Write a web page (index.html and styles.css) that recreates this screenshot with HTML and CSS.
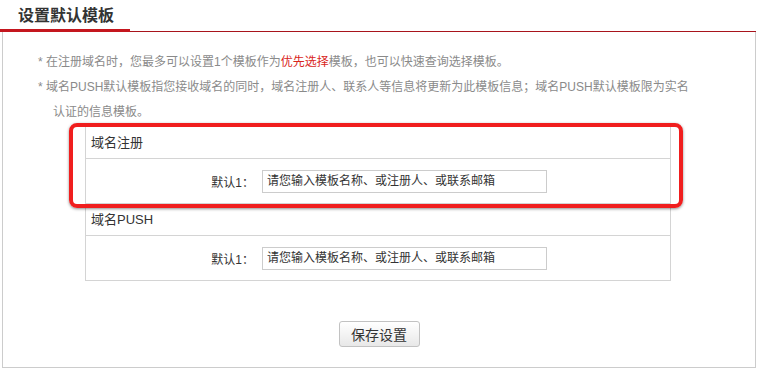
FILE: index.html
```html
<!DOCTYPE html>
<html lang="zh-CN">
<head>
    <meta charset="UTF-8">
    <title>设置默认模板</title>
    <link rel="stylesheet" href="styles.css">
</head>
<body>
    <div class="page">
        <div class="title-bar">
            <h2 class="title">设置默认模板</h2>
        </div>

        <div class="panel">
            <div class="notes">
                <p>* 在注册域名时，您最多可以设置1个模板作为<span class="hl">优先选择</span>模板，也可以快速查询选择模板。</p>
                <p>* 域名PUSH默认模板指您接收域名的同时，域名注册人、联系人等信息将更新为此模板信息；域名PUSH默认模板限为实名认证的信息模板。</p>
            </div>

            <div class="tpl-box">
                <div class="tpl-head">域名注册</div>
                <div class="tpl-row">
                    <label class="tpl-label">默认1：</label>
                    <input type="text" class="tpl-input" placeholder="请您输入模板名称、或注册人、或联系邮箱">
                </div>
            </div>

            <div class="tpl-box">
                <div class="tpl-head">域名PUSH</div>
                <div class="tpl-row">
                    <label class="tpl-label">默认1：</label>
                    <input type="text" class="tpl-input" placeholder="请您输入模板名称、或注册人、或联系邮箱">
                </div>
            </div>

            <div class="actions">
                <button class="btn-save">保存设置</button>
            </div>
        </div>

        <!-- 标注框 -->
        <div class="mark"></div>
    </div>
</body>
</html>
```

FILE: styles.css
```css
/* 全局 */
body {
    margin: 0;
    padding: 0;
    background: #ffffff;
    font-family: "Liberation Sans", "Noto Sans CJK SC", sans-serif;
    color: #333333;
}

.page {
    position: relative;
    width: 759px;
}

/* 标题栏 */
.title-bar {
    width: 756px;
    border-bottom: 1px solid #a8141c;
}

.title {
    box-sizing: border-box;
    width: 130px;
    height: 32px;
    margin: 0 0 -1px;
    padding: 5px 0 0 18px;
    font-size: 16px;
    line-height: 22px;
    font-weight: bold;
    color: #333333;
    border-bottom: 3px solid #c4161e;
}

/* 主体 */
.panel {
    box-sizing: border-box;
    width: 754px;
    margin-left: 2px;
    border: 1px solid #cccccc;
    border-top: none;
    padding: 18px 0 20px;
}

.notes {
    padding: 0 59px 0 50px;
}

.notes p {
    margin: 0;
    font-size: 12px;
    line-height: 25px;
    color: #8a8a8a;
    text-indent: -15px;
}

.notes .hl {
    color: #d9261c;
}

/* 模板块 */
.tpl-box {
    width: 586px;
    box-sizing: border-box;
    margin: 1px 0 0 82px;
    border: 1px solid #d4d4d4;
}

.tpl-box + .tpl-box {
    margin-top: -1px;
}

.tpl-head {
    height: 31px;
    line-height: 31px;
    padding-left: 5px;
    font-size: 13px;
    border-bottom: 1px solid #d4d4d4;
}

.tpl-row {
    display: flex;
    align-items: center;
    height: 44px;
}

.tpl-label {
    width: 176px;
    padding-right: 8px;
    box-sizing: border-box;
    text-align: right;
    font-size: 12px;
}

.tpl-input {
    box-sizing: border-box;
    width: 285px;
    height: 23px;
    margin: 0;
    padding: 0 4px;
    border: 1px solid #cccccc;
    font-family: inherit;
    font-size: 12px;
    color: #333333;
    outline: none;
}

.tpl-input::placeholder {
    color: #333333;
}

/* 按钮 */
.actions {
    margin-top: 40px;
    text-align: center;
}

.btn-save {
    width: 81px;
    height: 26px;
    padding: 0;
    font-family: inherit;
    font-size: 14px;
    color: #333333;
    background: linear-gradient(#ffffff, #e8e8e8);
    border: 1px solid #c2c2c2;
    border-radius: 3px;
    cursor: pointer;
}

/* 红色标注框 */
.mark {
    position: absolute;
    left: 69px;
    top: 123px;
    width: 614px;
    height: 85px;
    box-sizing: border-box;
    border: 4px solid #f01e1e;
    border-radius: 8px;
    box-shadow: 0 1px 3px rgba(0, 0, 0, 0.45);
}
```
